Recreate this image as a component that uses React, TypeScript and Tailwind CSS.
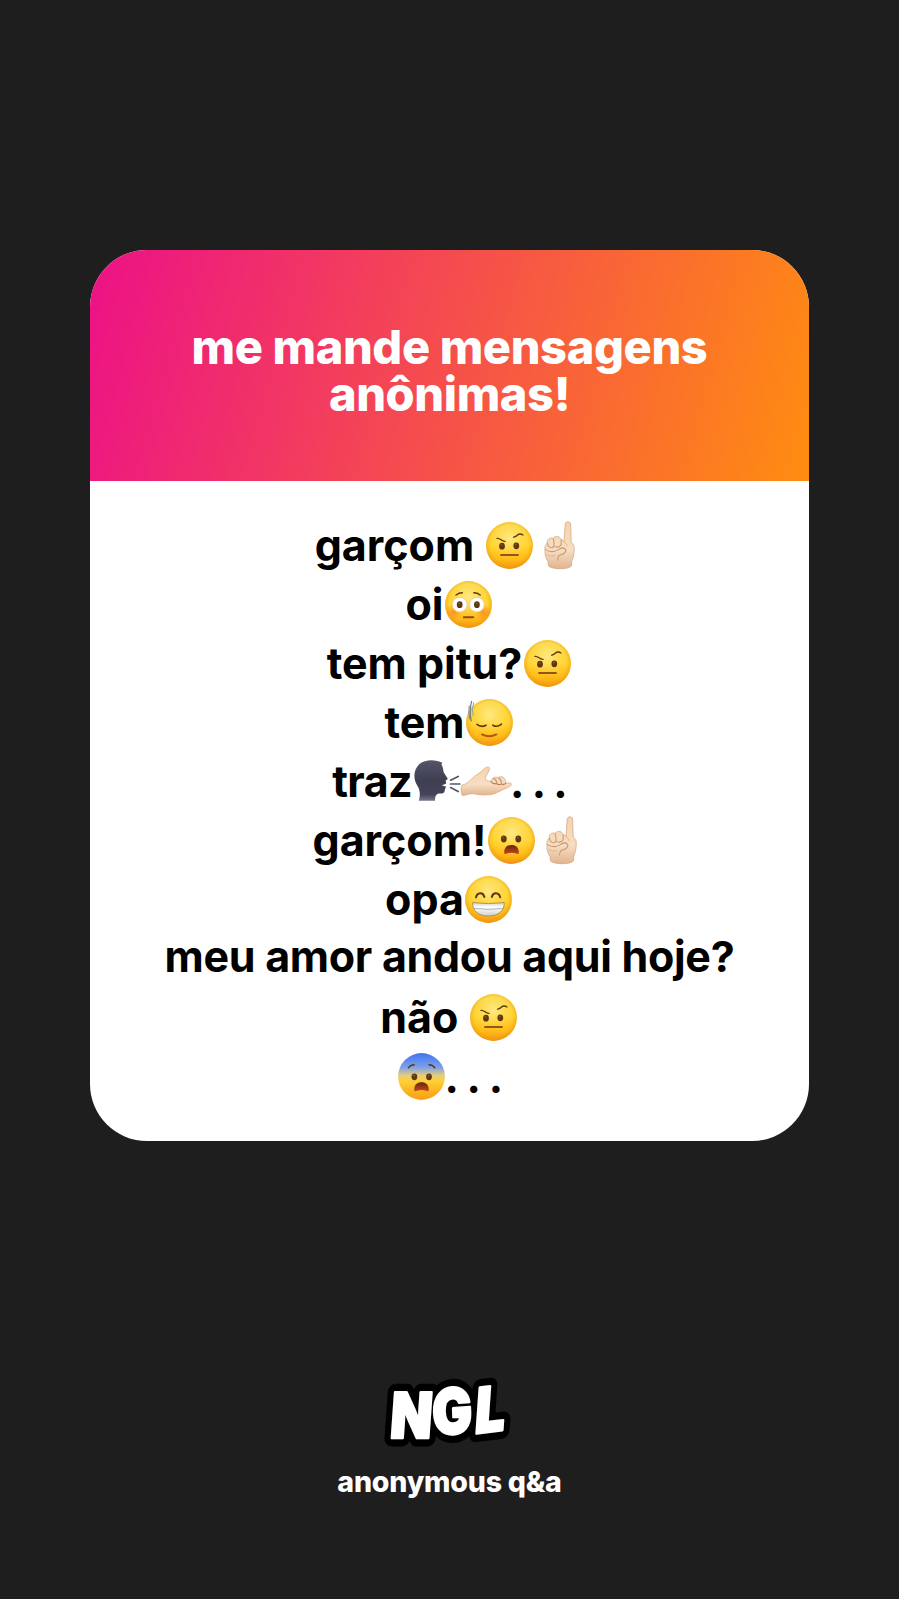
import type { ReactNode } from "react";

const BROWN = "#5f3812";

function Defs() {
  return (
    <svg width="0" height="0" className="absolute" aria-hidden="true">
      <defs>
        <linearGradient id="skin-y" x1="0" y1="0" x2="0" y2="1">
          <stop offset="0" stopColor="#fbd843" />
          <stop offset="0.5" stopColor="#ffd32f" />
          <stop offset="0.78" stopColor="#ffbd1a" />
          <stop offset="1" stopColor="#f79a10" />
        </linearGradient>
        <radialGradient id="glow" cx="0.5" cy="0.34" r="0.46">
          <stop offset="0" stopColor="#fff0a0" stopOpacity="0.75" />
          <stop offset="1" stopColor="#ffe060" stopOpacity="0" />
        </radialGradient>
        <radialGradient id="rim" cx="0.5" cy="0.47" r="0.53">
          <stop offset="0.76" stopColor="#f09c10" stopOpacity="0" />
          <stop offset="1" stopColor="#e8930c" stopOpacity="0.65" />
        </radialGradient>
        <linearGradient id="fear" x1="0" y1="0" x2="0" y2="1">
          <stop offset="0" stopColor="#3f74ee" />
          <stop offset="0.3" stopColor="#7ba0ea" />
          <stop offset="0.48" stopColor="#e6cd78" />
          <stop offset="0.6" stopColor="#ffcf33" />
          <stop offset="1" stopColor="#f99d12" />
        </linearGradient>
        <radialGradient id="blush" cx="0.5" cy="0.5" r="0.5">
          <stop offset="0" stopColor="#f9702c" stopOpacity="0.6" />
          <stop offset="1" stopColor="#f9802c" stopOpacity="0" />
        </radialGradient>
        <linearGradient id="mouth" x1="0" y1="0" x2="0" y2="1">
          <stop offset="0" stopColor="#64260c" />
          <stop offset="1" stopColor="#c2481c" />
        </linearGradient>
        <linearGradient id="teeth" x1="0" y1="0" x2="0" y2="1">
          <stop offset="0" stopColor="#d0d0cc" />
          <stop offset="0.35" stopColor="#ffffff" />
          <stop offset="1" stopColor="#cfcfcf" />
        </linearGradient>
        <linearGradient id="hand" x1="0" y1="0" x2="0" y2="1">
          <stop offset="0" stopColor="#f3d3ac" />
          <stop offset="0.6" stopColor="#f7dec3" />
          <stop offset="1" stopColor="#e2b48e" />
        </linearGradient>
        <linearGradient id="head" x1="0" y1="0" x2="0" y2="1">
          <stop offset="0" stopColor="#55556a" />
          <stop offset="0.5" stopColor="#3f3f52" />
          <stop offset="0.85" stopColor="#44445a" />
          <stop offset="1" stopColor="#77778e" />
        </linearGradient>
      </defs>
    </svg>
  );
}

function Emoji({ label, children }: { label: string; children: ReactNode }) {
  return (
    <span className="flex w-[50px] shrink-0 justify-center">
      <svg viewBox="0 0 47 47" role="img" aria-label={label} className="size-[47px] overflow-visible">
        {children}
      </svg>
    </span>
  );
}

function Disc({ fill = "url(#skin-y)", glow = true }: { fill?: string; glow?: boolean }) {
  return (
    <>
      <circle cx="23.5" cy="23.5" r="23.4" fill={fill} />
      {glow && <circle cx="23.5" cy="23.5" r="23.4" fill="url(#glow)" />}
      <circle cx="23.5" cy="23.5" r="23.4" fill={glow ? "url(#rim)" : "none"} />
    </>
  );
}

function Eye({ x, y }: { x: number; y: number }) {
  return (
    <>
      <ellipse cx={x} cy={y} rx="2.9" ry="3.4" fill={BROWN} />
      <circle cx={x - 0.4} cy={y - 1.2} r="0.8" fill="#8f6433" />
    </>
  );
}

function Stroke({ d, w = 1.4, c = BROWN }: { d: string; w?: number; c?: string }) {
  return <path d={d} fill="none" stroke={c} strokeWidth={w} strokeLinecap="round" strokeLinejoin="round" />;
}

function RaisedBrow() {
  return (
    <Emoji label="🤨">
      <Disc />
      <Stroke d="M11 16.4Q13 16.2 15 17.8T19 19.4" />
      <Stroke d="M27.8 15.2Q29.8 14.6 31.6 12.9Q34 11.2 37 13" />
      <Eye x={16} y={24.2} />
      <Eye x={30.3} y={23.8} />
      <Stroke d="M15 33H32" w={1.9} c="#96541a" />
    </Emoji>
  );
}

function Flushed() {
  return (
    <Emoji label="😳">
      <Disc />
      <circle cx="8.5" cy="31.5" r="8.4" fill="url(#blush)" />
      <circle cx="38.5" cy="31.5" r="8.4" fill="url(#blush)" />
      <Stroke d="M11 14Q14 11.8 17.4 11.8" />
      <Stroke d="M28.8 11.8Q32.4 11.8 35.2 14" />
      <circle cx="14.7" cy="23.7" r="7.3" fill="#fff" stroke="#e0c8a0" strokeWidth="0.6" />
      <circle cx="31.9" cy="23.7" r="7.3" fill="#fff" stroke="#e0c8a0" strokeWidth="0.6" />
      <Eye x={14.7} y={23.7} />
      <Eye x={31.9} y={23.7} />
      <Stroke d="M18.8 36.3H28.2" w={2} c="#96481a" />
    </Emoji>
  );
}

function ColdSweat() {
  return (
    <Emoji label="😓">
      <Disc />
      <Stroke d="M11 25.4Q15 28.8 20 26.2" w={1.6} />
      <Stroke d="M26.8 26.2Q31 28.8 35.4 25.2" w={1.6} />
      <Stroke d="M16 35.4Q23.3 39 30.4 35.4" w={1.9} c="#b05512" />
      <Stroke d="M3.2 7Q2 14 3.6 20" w={1} c="#7d858c" />
      <Stroke d="M5.6 2.4Q3.2 11 5.2 22" w={1.2} c="#727b84" />
      <Stroke d="M7.6 3.6Q5.4 10 7.2 17" w={1} c="#9a9f9f" />
    </Emoji>
  );
}

function OpenFrown({ y }: { y: number }) {
  return (
    <g transform={`translate(0 ${y})`}>
      <path d="M16.2 7.2C16.4 2.4 19.2 0 23.5 0S30.6 2.4 30.8 7.2C30.9 9.2 29.6 9.2 28.2 8.6C25 7.4 22 7.4 18.9 8.6C17.4 9.2 16.1 9.2 16.2 7.2Z" fill="url(#mouth)" />
    </g>
  );
}

function Frowning() {
  return (
    <Emoji label="😦">
      <Disc />
      <Eye x={15.8} y={22} />
      <Eye x={30.3} y={22} />
      <OpenFrown y={28} />
    </Emoji>
  );
}

function Grinning() {
  return (
    <Emoji label="😁">
      <Disc />
      <Stroke d="M11 21.4C12.2 16.2 18 15.8 19.4 21" w={2} />
      <Stroke d="M26.8 21C28.2 15.8 34 16.2 35.2 21.4" w={2} />
      <path d="M7.6 26.6Q23.4 28.6 39.2 26.6C39.6 34.6 33.6 40 23.4 40S7.2 34.6 7.6 26.6Z" fill="url(#teeth)" stroke="#a58d58" strokeWidth="0.9" strokeLinejoin="round" />
      <Stroke d="M8.8 32.4Q23.4 34.4 38 32.4" w={0.9} c="#a9a9a9" />
    </Emoji>
  );
}

function Fearful() {
  return (
    <Emoji label="😨">
      <Disc fill="url(#fear)" glow={false} />
      <Stroke d="M10.4 14.8Q12.4 12 16.2 11.8" />
      <Stroke d="M31 11.8Q35 12 36.8 14.8" />
      <Eye x={16.4} y={23.8} />
      <Eye x={31} y={23.8} />
      <OpenFrown y={29.2} />
    </Emoji>
  );
}

function PointUp() {
  return (
    <Emoji label="☝🏻">
      <path
        d="M28 19.5L29.2 2C29.4 -0.8 34.4 -1 34.6 2L35.2 20C37.8 22 38.6 24.4 38.2 28.6C37.8 33.2 37.2 36.2 35.6 39.4V43.8C33.4 47.6 15.4 47.8 12.4 43.8L12 39.6C9.6 36 8.6 32 9 28C8.2 25 9.8 22.4 11.2 21C10.8 17.4 14 15 17 16.4C19.4 13.4 24.2 14 25 17.4Q26.6 17.6 28 19.5Z"
        fill="url(#hand)"
        stroke="#d0a27c"
        strokeWidth="0.7"
      />
      <Stroke d="M11.4 21.4Q12.6 26.4 17 25.6Q19 22 17.2 17" w={1.1} c="#cc9c76" />
      <Stroke d="M18.8 24.4Q23.4 26.4 25.2 22.4V18" w={1.1} c="#cc9c76" />
      <Stroke d="M9.6 27.6Q16 31.6 22.4 27.6Q27.4 24.2 30 27.8Q29.6 32.4 23.4 33.2Q21.4 35.4 21.6 38" w={1.1} c="#c8966e" />
      <Stroke d="M28 19.5Q30.6 21 31.2 24" w={0.8} c="#d8ae8a" />
      <Stroke d="M11 32.6Q14.4 35.4 18.8 33.4" w={0.8} c="#d8ae8a" />
    </Emoji>
  );
}

function SpeakingHead() {
  return (
    <Emoji label="🗣">
      <path
        d="M4.8 42.8C6.4 37.6 6.2 32.4 3.8 28.4C-1.4 20.6 -0.4 11.4 5.2 6.2C11.4 1 21.4 1.2 28.4 4.8L27.4 6.2C29.2 9.4 29.2 12.2 29.8 14.4L33.6 20.4C34 21.6 32.6 22 31.6 22.4L32.2 25.4L27.8 27.6L32 28.6C31.8 30.2 31 30.8 30.8 31.8C31 34.6 29 35.8 26 35.6C22.8 35.6 21 37 21 42.8Z"
        fill="url(#head)"
      />
      <Stroke d="M36.6 22.2L44.2 18.4" w={1.7} c="#55556a" />
      <Stroke d="M36.6 26H45.8" w={1.7} c="#55556a" />
      <Stroke d="M36.6 29.6L44.2 33.6" w={1.7} c="#55556a" />
    </Emoji>
  );
}

function PalmUp() {
  return (
    <Emoji label="🫴🏻">
      <g transform="translate(-1.2 0)">
        <path
          d="M-1 27.2C3.6 26.4 6.4 23.4 9.4 20.4C12.8 16.8 17.4 15 20 12C22 9.6 25.6 7.8 26.6 9.8C27.4 11.8 24.2 16 22.4 20C22.4 22.6 25.6 23.4 28.2 23.2C29 19.8 32.4 18.2 35.2 19.6C37.8 18 41.2 18.6 42 21.4C43.2 22.6 43.6 24 42.8 25.2L47.4 25C49.6 25.6 48.8 27.6 46.8 28.6L33.2 35C28.6 37.4 19 37.6 11 35.8C6 35.2 3.4 37.6 -0.6 37.6C-2 34.4 -2 30.4 -1 27.2Z"
          fill="url(#hand)"
          stroke="#d6a67e"
          strokeWidth="0.7"
        />
        <Stroke d="M28.4 23.6Q30.4 26.6 33.6 25.4Q36 27.6 38.6 26Q41 27.2 42.8 25.4" w={1.3} c="#c08455" />
        <Stroke d="M30.8 20.6Q33.8 21.4 34 25M36 20.2Q38.8 21.8 38.6 25.6" w={1.1} c="#cc9668" />
      </g>
    </Emoji>
  );
}

function Row({ children }: { children: ReactNode }) {
  return <div className="flex h-[59px] items-center justify-center whitespace-pre">{children}</div>;
}

function T({ children, className = "pb-px" }: { children: ReactNode; className?: string }) {
  return <span className={className}>{children}</span>;
}

const LETTERS = [
  { ch: "N", at: "translate(411.8 1414.6) skewX(-4) scale(0.86 1)", size: 63 },
  { ch: "G", at: "translate(452 1411) rotate(-4) skewX(-2) scale(0.84 1)", size: 63 },
  { ch: "L", at: "translate(490.5 1409) rotate(-7) skewX(-11) scale(0.86 1)", size: 62 },
];

function Logo() {
  return (
    <svg
      viewBox="380 1370 140 84"
      className="h-[84px] w-[140px] font-['Inter',sans-serif] font-black"
      role="img"
      aria-label="NGL"
    >
      {["#000", "#fff"].map((c) =>
        LETTERS.map((l) => (
          <text
            key={c + l.ch}
            transform={l.at}
            y={l.size * 0.3635}
            textAnchor="middle"
            fontSize={l.size}
            fill={c}
            stroke={c}
            strokeWidth={c === "#000" ? 17 : 2.6}
            strokeLinejoin="round"
            aria-hidden="true"
          >
            {l.ch}
          </text>
        )),
      )}
    </svg>
  );
}

export default function App() {
  return (
    <main className="flex h-[1599px] w-full flex-col items-center overflow-hidden bg-[#1e1e1e] pt-[250px] font-['Inter',sans-serif]">
      <Defs />
      <section className="flex h-[891px] w-[719px] flex-col overflow-hidden rounded-[57px] bg-white">
        <h1 className="flex h-[231px] shrink-0 flex-col items-center justify-center bg-[linear-gradient(105deg,#ec1187,#ff8d10)] pt-2 text-center text-[47px] leading-[47px] font-[850] tracking-[-0.4px] text-white">
          <span>me mande mensagens</span>
          <span>anônimas!</span>
        </h1>
        <div className="flex flex-col pt-[35px] text-[43px] leading-[59px] font-[650] text-black">
          <Row>
            <T>{"garçom "}</T>
            <RaisedBrow />
            <PointUp />
          </Row>
          <Row>
            <T>oi</T>
            <Flushed />
          </Row>
          <Row>
            <T>tem pitu?</T>
            <RaisedBrow />
          </Row>
          <Row>
            <T>tem</T>
            <ColdSweat />
          </Row>
          <Row>
            <T className="pb-px tracking-[-0.6px]">traz</T>
            <SpeakingHead />
            <PalmUp />
            <T className="-ml-0.5 pt-0.5 tracking-[-0.8px]">. . .</T>
          </Row>
          <Row>
            <T>garçom!</T>
            <Frowning />
            <PointUp />
          </Row>
          <Row>
            <T>opa</T>
            <Grinning />
          </Row>
          <Row>
            <T className="pb-1 tracking-[-0.3px]">meu amor andou aqui hoje?</T>
          </Row>
          <Row>
            <T>{"não "}</T>
            <RaisedBrow />
          </Row>
          <Row>
            <Fearful />
            <T className="-ml-0.5 pt-0.5 tracking-[-0.6px]">. . .</T>
          </Row>
        </div>
      </section>
      <footer className="flex flex-col items-center pt-[229px]">
        <Logo />
        <p className="mt-2.5 text-[28.5px] leading-9 font-[850] tracking-[-0.2px] text-white">anonymous q&amp;a</p>
      </footer>
    </main>
  );
}
